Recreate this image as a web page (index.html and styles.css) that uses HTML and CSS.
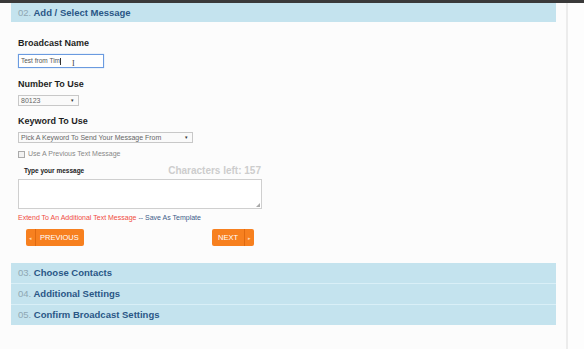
FILE: index.html
```html
<!DOCTYPE html>
<html lang="en">
<head>
    <meta charset="UTF-8">
    <title>Add / Select Message</title>
    <link rel="stylesheet" href="styles.css">
</head>
<body>
    <div class="top-line"></div>
    <div class="page">
        <div class="content">
            <div class="step-head"><span class="step-num">02.</span> Add / Select Message</div>

            <div class="step-body">
                <div class="field-label">Broadcast Name</div>
                <div class="text-input focused">Test from Tim<span class="caret"></span><span class="cursor">I</span></div>

                <div class="field-label">Number To Use</div>
                <div class="select-box short">80123<span class="arrow">&#9662;</span></div>

                <div class="field-label">Keyword To Use</div>
                <div class="select-box wide">Pick A Keyword To Send Your Message From<span class="arrow">&#9662;</span></div>

                <label class="check-row"><span class="check"></span>Use A Previous Text Message</label>

                <div class="message-head">
                    <span class="message-label">Type your message</span>
                    <span class="chars-left">Characters left: 157</span>
                </div>
                <div class="message-area"><span class="grip"></span></div>

                <div class="link-row">
                    <a href="#" class="link-red">Extend To An Additional Text Message</a>
                    <span class="link-sep">--</span>
                    <a href="#" class="link-blue">Save As Template</a>
                </div>

                <div class="button-row">
                    <button class="nav-button prev"><span class="btn-arrow left">&#9666;</span><span class="btn-text">PREVIOUS</span></button>
                    <button class="nav-button next"><span class="btn-text">NEXT</span><span class="btn-arrow right">&#9656;</span></button>
                </div>
            </div>

            <div class="step-list">
                <div class="step-bar"><span class="step-num">03.</span> Choose Contacts</div>
                <div class="step-bar"><span class="step-num">04.</span> Additional Settings</div>
                <div class="step-bar"><span class="step-num">05.</span> Confirm Broadcast Settings</div>
            </div>
        </div>
        <div class="side"></div>
    </div>
</body>
</html>
```

FILE: styles.css
```css
body {
    margin: 0;
    padding: 0;
    font-family: 'Liberation Sans', Arial, sans-serif;
    background-color: #fcfcfc;
    color: #222;
    overflow: hidden;
}

.top-line {
    height: 3px;
    background-color: #3a3a3a;
}

.page {
    display: flex;
    height: 346px;
}

.content {
    width: 545px;
    padding: 0 10px 0 11px;
}

.side {
    flex: 1;
    border-left: 2px solid #ececec;
    background-color: #fdfdfd;
}

.step-head,
.step-bar {
    background-color: #c4e3ee;
    color: #2a5786;
    font-weight: bold;
    font-size: 9.5px;
    line-height: 19px;
    padding-left: 7px;
}

.step-num {
    color: #8fa7b3;
    font-weight: normal;
}

.step-body {
    padding: 15px 0 0 7px;
}

.field-label {
    font-size: 9px;
    font-weight: bold;
    line-height: 12px;
    color: #1f1f1f;
    margin-bottom: 5px;
}

.text-input {
    position: relative;
    width: 82px;
    height: 12px;
    border: 1px solid #6b9be0;
    box-shadow: 0 0 1px #9cc0f0;
    background-color: #fff;
    font-size: 6.5px;
    line-height: 12px;
    padding-left: 2px;
    color: #555;
    margin-bottom: 10px;
}

.caret {
    display: inline-block;
    width: 1px;
    height: 7px;
    background-color: #333;
    vertical-align: middle;
}

.cursor {
    position: absolute;
    left: 53px;
    top: 3px;
    font-family: 'Liberation Serif', serif;
    font-size: 8px;
    color: #444;
}

.select-box {
    position: relative;
    height: 9px;
    border: 1px solid #c8c8c8;
    background-color: #fafafa;
    font-size: 7px;
    line-height: 9px;
    padding-left: 2px;
    color: #666;
}

.select-box.short {
    width: 57px;
    margin-bottom: 9px;
}

.select-box.wide {
    width: 171px;
    margin-bottom: 6px;
}

.arrow {
    position: absolute;
    right: 4px;
    top: 0;
    font-size: 5px;
    color: #333;
}

.check-row {
    display: flex;
    align-items: center;
    gap: 3px;
    font-size: 7px;
    line-height: 10px;
    color: #888;
    margin-bottom: 5px;
}

.check {
    width: 5px;
    height: 5px;
    border: 1px solid #aaa;
    background-color: #f2f2f2;
}

.message-head {
    display: flex;
    justify-content: space-between;
    align-items: center;
    width: 237px;
    padding-left: 6px;
    height: 13px;
    margin-bottom: 2px;
}

.message-label {
    font-size: 6.5px;
    font-weight: bold;
    color: #222;
}

.chars-left {
    font-size: 10px;
    font-weight: bold;
    color: #cdcdcd;
}

.message-area {
    position: relative;
    width: 242px;
    height: 28px;
    border: 1px solid #cfcfcf;
    background-color: #fff;
    margin-bottom: 4px;
}

.grip {
    position: absolute;
    right: 1px;
    bottom: 1px;
    width: 0;
    height: 0;
    border-left: 4px solid transparent;
    border-bottom: 4px solid #aaa;
}

.link-row {
    font-size: 7px;
    line-height: 10px;
    margin-bottom: 6px;
}

.link-row a {
    text-decoration: none;
}

.link-red {
    color: #f04b3f;
}

.link-sep {
    color: #3c5d8a;
}

.link-blue {
    color: #3c5d8a;
}

.button-row {
    display: flex;
    justify-content: space-between;
    width: 228px;
    padding-left: 8px;
    margin-bottom: 17px;
}

.nav-button {
    display: flex;
    align-items: stretch;
    height: 17px;
    padding: 0;
    border: none;
    border-radius: 2px;
    background-color: #f7801f;
    color: #fff;
    font-family: 'Liberation Sans', Arial, sans-serif;
    font-size: 7.5px;
    cursor: pointer;
}

.btn-text {
    display: flex;
    align-items: center;
}

.prev .btn-text {
    padding: 0 5px 0 4px;
}

.next .btn-text {
    padding: 0 6px;
}

.btn-arrow {
    display: flex;
    align-items: center;
    padding: 0 3px;
    font-size: 5px;
    color: #ffd6b0;
}

.btn-arrow.left {
    border-right: 1px solid #e06a10;
}

.btn-arrow.right {
    border-left: 1px solid #e06a10;
}

.step-bar {
    line-height: 20px;
    border-top: 1px solid #d9eff7;
}

.step-bar:first-child {
    border-top: none;
}
```
